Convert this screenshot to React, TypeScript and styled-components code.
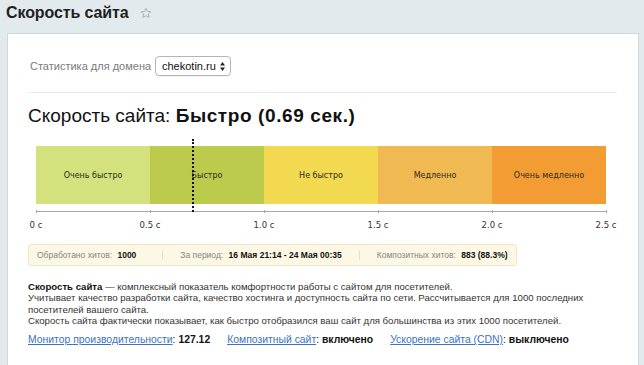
import styled, { createGlobalStyle } from 'styled-components'

const GlobalStyle = createGlobalStyle`
    html, body {
        margin: 0;
        padding: 0;
        background: #e3eaed;
    }
    body {
        font-family: "Liberation Sans", Arial, sans-serif;
        color: #222;
    }
`

const Page = styled.div`
    min-height: 365px;
    padding: 0 5px 0 6px;
    box-sizing: border-box;
    overflow: hidden;
`

const Header = styled.div`
    height: 33px;
    display: flex;
    align-items: center;
    padding-bottom: 7px;
    box-sizing: border-box;
`

const Title = styled.h1`
    margin: 0;
    font-size: 16px;
    font-weight: 700;
    color: #1f1f1f;
    letter-spacing: -0.1px;
`

const Star = styled.svg`
    margin-left: 11px;
    width: 12px;
    height: 12px;
`

const Panel = styled.div`
    margin-left: 1px;
    width: 632px;
    min-height: 340px;
    box-sizing: border-box;
    background: #fff;
    border: 1px solid #cfd8dc;
    border-bottom: none;
    padding: 22px 21px 0 20px;
`

const DomainRow = styled.div`
    display: flex;
    align-items: center;
    height: 20px;
    padding-left: 2px;
`

const Label = styled.span`
    font-size: 11px;
    color: #7b7b7b;
    width: 125px;
`

const Select = styled.div`
    width: 76px;
    height: 20px;
    box-sizing: border-box;
    border: 1px solid #b5b5b5;
    border-radius: 4px;
    display: flex;
    align-items: center;
    justify-content: space-between;
    padding: 0 5px 0 6px;
    font-size: 11px;
    color: #111;
    box-shadow: 0 1px 1px rgba(0, 0, 0, 0.06);
`

const Divider = styled.div`
    margin-top: 16px;
    border-top: 1px solid #ececec;
`

const Heading = styled.h2`
    margin: 12px 0 0;
    font-size: 19px;
    line-height: 22px;
    font-weight: 400;
    color: #111;
    b {
        font-weight: 700;
        letter-spacing: 0.6px;
    }
`

const Chart = styled.div`
    position: relative;
    margin: 19px 0 0 8px;
    width: 570px;
`

const Bar = styled.div`
    display: flex;
    height: 58px;
`

const Segment = styled.div<{ $bg: string }>`
    flex: 1;
    background: ${p => p.$bg};
    display: flex;
    align-items: center;
    justify-content: center;
    font-family: "DejaVu Sans", Verdana, sans-serif;
    font-size: 8px;
    color: #2b2b1f;
`

const Marker = styled.div`
    position: absolute;
    top: -7px;
    height: 73px;
    width: 0;
    border-left: 2px dotted #111;
`

const Axis = styled.div`
    margin-top: 7px;
    border-top: 1px solid #a8a8a8;
    display: flex;
    justify-content: space-between;
`

const Tick = styled.div`
    width: 0;
    display: flex;
    flex-direction: column;
    align-items: center;
    &::before {
        content: '';
        width: 1px;
        height: 3px;
        background: #a8a8a8;
        margin-top: -2px;
    }
`

const TickLabel = styled.span`
    margin-top: 7px;
    white-space: nowrap;
    font-family: "DejaVu Sans", Verdana, sans-serif;
    font-size: 8.5px;
    color: #333;
`

const InfoBox = styled.div`
    margin-top: 14px;
    display: inline-flex;
    align-items: center;
    height: 22px;
    box-sizing: border-box;
    background: #fcf8e5;
    border: 1px solid #efe6c4;
    border-radius: 3px;
    padding: 0 8px 0 8px;
    font-size: 8.5px;
`

const InfoItem = styled.div`
    padding: 0 17px;
    color: #858585;
    white-space: nowrap;
    & + & {
        border-left: 1px solid #e8dfbf;
    }
    &:first-child {
        padding-left: 0;
        padding-right: 26px;
    }
    &:last-child {
        padding-right: 0;
    }
    b {
        color: #111;
        margin-left: 3px;
    }
`

const Description = styled.div`
    margin-top: 15px;
    font-size: 9.6px;
    line-height: 11.3px;
    color: #333;
    white-space: nowrap;
    b {
        color: #111;
    }
`

const Links = styled.div`
    margin-top: 8px;
    display: flex;
    gap: 17px;
    font-size: 10.4px;
    color: #111;
    b {
        font-weight: 700;
    }
`

const Link = styled.a`
    color: #3a72c4;
    text-decoration: underline;
    cursor: pointer;
`

const segments = [
    { name: 'Очень быстро', color: '#d4e17c' },
    { name: 'Быстро', color: '#bdcb4c' },
    { name: 'Не быстро', color: '#f2d94f' },
    { name: 'Медленно', color: '#f1b952' },
    { name: 'Очень медленно', color: '#f49c34' },
]

const ticks = ['0 с', '0.5 с', '1.0 с', '1.5 с', '2.0 с', '2.5 с']

const speed = 0.69
const maxSpeed = 2.5

export default function App() {
    return (
        <>
            <GlobalStyle />
            <Page>
                <Header>
                    <Title>Скорость сайта</Title>
                    <Star viewBox="0 0 24 24">
                        <path
                            d="M12 2.5l2.9 6.3 6.8.7-5.1 4.6 1.5 6.8L12 17.4l-6.1 3.5 1.5-6.8-5.1-4.6 6.8-.7z"
                            fill="none"
                            stroke="#9aa4ad"
                            strokeWidth="1.6"
                            strokeLinejoin="round"
                        />
                    </Star>
                </Header>
                <Panel>
                    <DomainRow>
                        <Label>Статистика для домена</Label>
                        <Select>
                            chekotin.ru
                            <svg width="5" height="9" viewBox="0 0 5 9">
                                <path d="M2.5 0L5 3.5H0z M2.5 9L0 5.5H5z" fill="#222" />
                            </svg>
                        </Select>
                    </DomainRow>
                    <Divider />
                    <Heading>
                        Скорость сайта: <b>Быстро (0.69 сек.)</b>
                    </Heading>
                    <Chart>
                        <Bar>
                            {segments.map(s => (
                                <Segment key={s.name} $bg={s.color}>{s.name}</Segment>
                            ))}
                        </Bar>
                        <Marker style={{ left: `${(speed / maxSpeed) * 570 - 1}px` }} />
                        <Axis>
                            {ticks.map(t => (
                                <Tick key={t}>
                                    <TickLabel>{t}</TickLabel>
                                </Tick>
                            ))}
                        </Axis>
                    </Chart>
                    <InfoBox>
                        <InfoItem>Обработано хитов: <b>1000</b></InfoItem>
                        <InfoItem>За период: <b>16 Мая 21:14 - 24 Мая 00:35</b></InfoItem>
                        <InfoItem>Композитных хитов: <b>883 (88.3%)</b></InfoItem>
                    </InfoBox>
                    <Description>
                        <b>Скорость сайта</b> — комплексный показатель комфортности работы с сайтом для посетителей.<br />
                        Учитывает качество разработки сайта, качество хостинга и доступность сайта по сети. Рассчитывается для 1000 последних<br />
                        посетителей вашего сайта.<br />
                        Скорость сайта фактически показывает, как быстро отобразился ваш сайт для большинства из этих 1000 посетителей.
                    </Description>
                    <Links>
                        <span><Link>Монитор производительности</Link>: <b>127.12</b></span>
                        <span><Link>Композитный сайт</Link>: <b>включено</b></span>
                        <span><Link>Ускорение сайта (CDN)</Link>: <b>выключено</b></span>
                    </Links>
                </Panel>
            </Page>
        </>
    )
}
